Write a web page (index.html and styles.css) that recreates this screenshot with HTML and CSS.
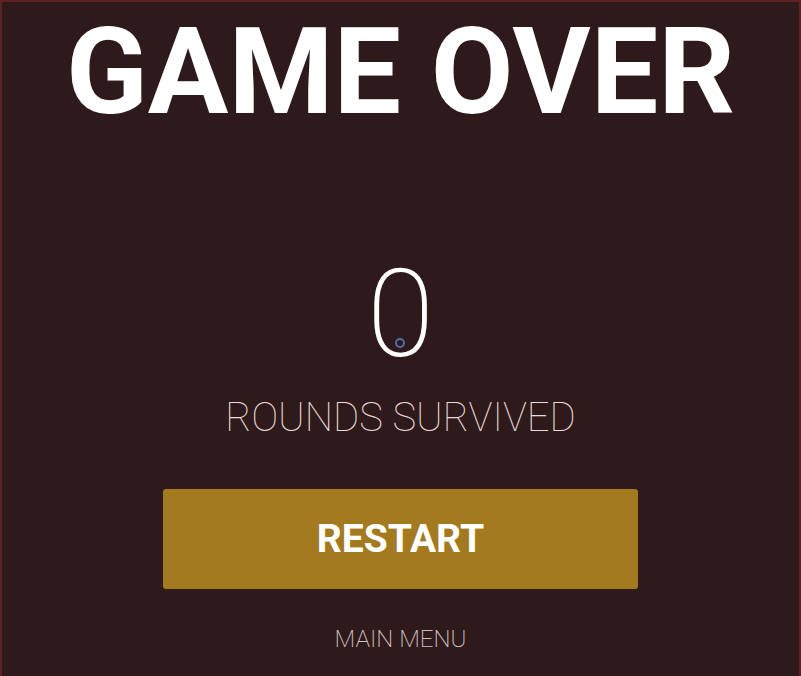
FILE: index.html
```html
<!DOCTYPE html>
<html>
<head>
<meta charset="utf-8">
<link rel="stylesheet" href="styles.css">
</head>
<body>
<div class="screen">
  <h1 class="title">GAME OVER</h1>
  <div class="score">
    <span class="score-value">0</span>
    <span class="cursor-dot"></span>
  </div>
  <div class="score-label">ROUNDS SURVIVED</div>
  <button class="restart">RESTART</button>
  <div class="menu-link">MAIN MENU</div>
</div>
</body>
</html>
```
FILE: styles.css
```css
html, body {
  margin: 0;
  padding: 0;
  background: #2e1a1a;
}
.screen {
  box-sizing: border-box;
  width: 801px;
  min-height: 700px;
  border: 2px solid #5e2222;
  background: #2e1a1a;
  display: flex;
  flex-direction: column;
  align-items: center;
  font-family: Roboto, "Liberation Sans", sans-serif;
  color: #fff;
}
.title {
  margin: 0;
  font-size: 120px;
  font-weight: 700;
  line-height: 140px;
}
.score {
  position: relative;
  margin-top: 113px;
  font-size: 122px;
  font-weight: 200;
  line-height: 120px;
}
.cursor-dot {
  position: absolute;
  left: 50%;
  top: 83px;
  box-sizing: border-box;
  width: 10px;
  height: 10px;
  margin-left: -5px;
  border: 2px solid #4b6fae;
  border-radius: 50%;
}
.score-label {
  margin-top: 18px;
  font-size: 40px;
  font-weight: 100;
  color: #eadcdc;
  line-height: 50px;
}
.restart {
  margin-top: 46px;
  width: 475px;
  height: 100px;
  border: none;
  border-radius: 3px;
  background: #a37a1f;
  color: #fff;
  font-family: Roboto, "Liberation Sans", sans-serif;
  font-size: 39px;
  font-weight: 700;
}
.menu-link {
  margin-top: 36px;
  font-size: 24px;
  font-weight: 200;
  color: #d0c0c0;
}
```
